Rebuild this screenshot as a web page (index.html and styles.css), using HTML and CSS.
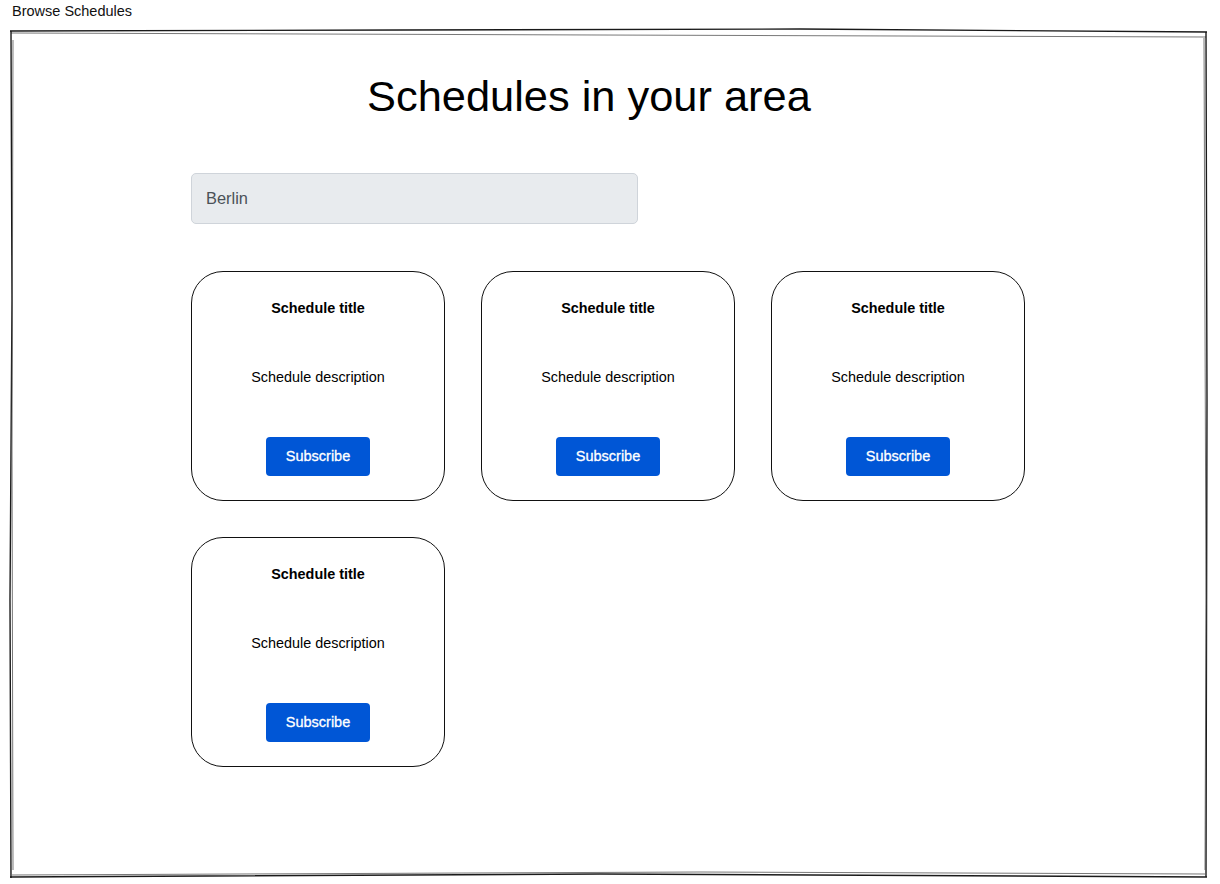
FILE: index.html
```html
<!DOCTYPE html>
<html lang="en">
<head>
<meta charset="utf-8">
<title>Browse Schedules</title>
<link rel="stylesheet" href="styles.css">
</head>
<body>
<div class="label">Browse Schedules</div>
<div class="frame">
  <svg class="sketch" width="1220" height="884" viewBox="0 0 1220 884" aria-hidden="true">
    <path d="M10 31 L400 30 L800 29 L1207 32" />
    <path d="M11 33 L600 35 L1206 37" class="thin" />
    <path d="M11 31 L12 300 L10 600 L11 878" />
    <path d="M13 40 L12 450 L13 870" class="thin" />
    <path d="M10 877 L600 874 L1207 877" />
    <path d="M12 875 L700 872 L1205 874" class="thin" />
    <path d="M1206 32 L1207 400 L1206 877" />
    <path d="M1204 38 L1206 600 L1205 870" class="thin" />
  </svg>
  <div class="content">
    <h1 class="title">Schedules in your area</h1>
    <div class="search">Berlin</div>
    <div class="grid">
      <div class="card">
        <div class="card-title">Schedule title</div>
        <div class="card-desc">Schedule description</div>
        <div class="btn">Subscribe</div>
      </div>
      <div class="card">
        <div class="card-title">Schedule title</div>
        <div class="card-desc">Schedule description</div>
        <div class="btn">Subscribe</div>
      </div>
      <div class="card">
        <div class="card-title">Schedule title</div>
        <div class="card-desc">Schedule description</div>
        <div class="btn">Subscribe</div>
      </div>
      <div class="card">
        <div class="card-title">Schedule title</div>
        <div class="card-desc">Schedule description</div>
        <div class="btn">Subscribe</div>
      </div>
    </div>
  </div>
</div>
</body>
</html>
```
FILE: styles.css
```css
html, body {
  margin: 0;
  padding: 0;
  background: #ffffff;
}
body {
  font-family: "Liberation Sans", Arial, sans-serif;
  color: #000;
  width: 1220px;
  height: 884px;
  overflow: hidden;
}
.label {
  height: 31px;
  box-sizing: border-box;
  padding: 3px 0 0 12px;
  font-size: 14.5px;
  line-height: 16px;
  color: #111;
}
.frame {
  height: 853px;
}
.sketch {
  position: absolute;
  left: 0;
  top: 0;
  pointer-events: none;
  fill: none;
  stroke: #1a1a1a;
  stroke-width: 1.4;
}
.sketch .thin {
  stroke: #555;
  stroke-width: 0.8;
}
.content {
  padding: 40px 0 0 191px;
}
.title {
  margin: 0 0 0 176px;
  font-size: 43.4px;
  line-height: 50px;
  font-weight: normal;
  color: #000;
}
.search {
  margin-top: 52px;
  width: 447px;
  height: 51px;
  box-sizing: border-box;
  border: 1px solid #cfd4da;
  border-radius: 5px;
  background: #e8ebee;
  padding-left: 14px;
  font-size: 16.4px;
  line-height: 49px;
  color: #4b5157;
}
.grid {
  margin-top: 47px;
  display: grid;
  grid-template-columns: repeat(3, 254px);
  column-gap: 36px;
  row-gap: 36px;
}
.card {
  height: 230px;
  box-sizing: border-box;
  border: 1px solid #111;
  border-radius: 32px;
  display: flex;
  flex-direction: column;
  align-items: center;
  padding-top: 27px;
}
.card-title {
  font-size: 14.4px;
  font-weight: bold;
  line-height: 18px;
}
.card-desc {
  margin-top: 51px;
  font-size: 14.4px;
  line-height: 18px;
}
.btn {
  margin-top: 51px;
  width: 104px;
  height: 39px;
  box-sizing: border-box;
  border-radius: 4px;
  background: #0056d6;
  color: #fff;
  font-size: 14.5px;
  -webkit-text-stroke: 0.3px #ffffff;
  line-height: 39px;
  text-align: center;
}
```
